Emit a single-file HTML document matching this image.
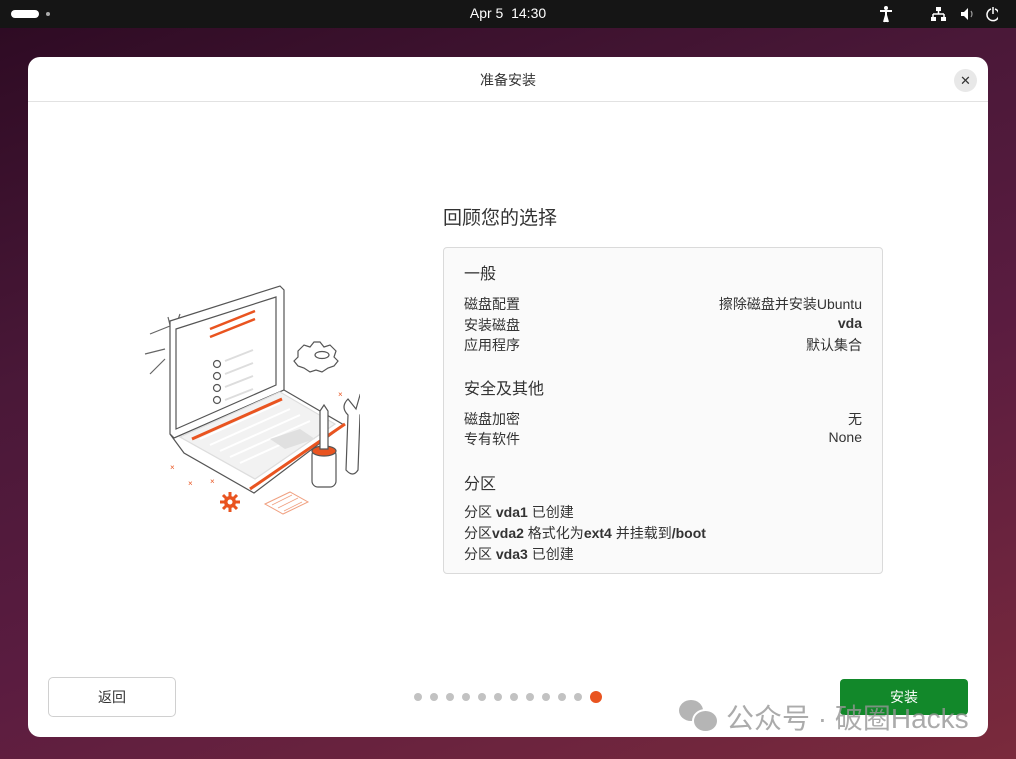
<!DOCTYPE html>
<html><head><meta charset="utf-8"><style>
*{margin:0;padding:0;box-sizing:border-box}
body{width:1016px;height:759px;overflow:hidden;position:relative;font-family:"Liberation Sans","Noto Sans CJK SC",sans-serif;
background:linear-gradient(160deg,#2c0a22 0%,#4a1838 35%,#5a1c40 60%,#7a2a3c 100%)}
.top{position:absolute;left:0;top:0;width:1016px;height:28px;background:#151515;color:#fff}
.dlg{position:absolute;left:28px;top:57px;width:960px;height:680px;background:#fff;border-radius:12px;overflow:hidden}
.hdr{position:absolute;left:0;top:0;width:960px;height:45px;border-bottom:1px solid #e2e2e2;text-align:center;line-height:46px;font-size:14px;color:#333}
.x{position:absolute;right:11px;top:12px;width:23px;height:23px;border-radius:50%;background:#e8e8e8;text-align:center;line-height:23px;font-size:13px;color:#333}
.t{position:absolute;color:#333;font-size:14px;white-space:nowrap}
.card{position:absolute;left:415px;top:190px;width:440px;height:327px;background:#fafafa;border:1px solid #dadada;border-radius:4px}
.r{right:20px;text-align:right}
b{font-weight:bold}
.dot{position:absolute;top:636px;width:8px;height:8px;border-radius:50%;background:#c2c2c2}
</style></head><body>
<div class="top">
<div style="position:absolute;left:11px;top:10px;width:28px;height:8px;border-radius:4px;background:#fff"></div>
<div style="position:absolute;left:46px;top:12px;width:4px;height:4px;border-radius:50%;background:#aaa"></div>
<div style="position:absolute;left:0;width:1016px;top:5px;text-align:center;font-size:14px">Apr 5&nbsp; 14:30</div>
<svg style="position:absolute;left:878px;top:5px" width="120" height="18" viewBox="0 0 120 18" fill="#fff" stroke="#fff">
<circle cx="8" cy="3" r="2" stroke="none"/><path d="M2 6h12M8 6v11M8 10l-2 7M8 10l2 7" stroke-width="2" fill="none"/>
<rect x="58" y="2" width="5" height="4" stroke="none"/><path d="M60.5 6v3M55 9h11M55 9v3M66 9v3" stroke-width="1.5" fill="none"/><rect x="53" y="12" width="5" height="4" stroke="none"/><rect x="63" y="12" width="5" height="4" stroke="none"/>
<path d="M83 7h3l4-4v12l-4-4h-3z" stroke="none"/><path d="M93 6q2 3 0 6" stroke-width="1.2" fill="none" stroke="#999"/>
<path d="M113 4a6 6 0 1 0 4 0M115 2v7" stroke-width="1.5" fill="none"/>
</svg>
</div>
<div class="dlg">
<div class="hdr">准备安装</div>
<div class="x">✕</div>
<svg style="position:absolute;left:92px;top:222px" width="240" height="240" viewBox="100 280 240 240" fill="none" stroke="#555" stroke-width="1.2">
<path d="M130 335l20-8M125 355l20-5M130 375l15-15M148 318l5 20M160 315l-7 20" stroke="#666"/>
<path d="M150 322l110-35l4 4v100l-110 48l-4-4z" fill="#fff"/>
<path d="M156 330l100-32v88l-100 44z" fill="#fff"/>
<path d="M150 435l4 4l110-48l60 35l-90 68l-70-40z" fill="#fff"/>
<path d="M160 438l100-45l55 32l-80 55z" fill="#f2f2f2" stroke="#ddd"/>
<path d="M180 440l80-36M190 446l80-36M200 452l80-36M210 458l80-36M220 464l55-25" stroke="#fff" stroke-width="2"/>
<path d="M172 440l90-40" stroke="#e95420" stroke-width="3"/>
<path d="M230 490l95-65" stroke="#e95420" stroke-width="3"/>
<path d="M190 330l45-18M190 338l45-18" stroke="#e95420" stroke-width="2.5"/>
<path d="M205 362l28-11M205 375l28-11M205 388l28-11M205 401l28-11" stroke="#ddd" stroke-width="2"/>
<circle cx="197" cy="365" r="3.5"/><circle cx="197" cy="377" r="3.5"/><circle cx="197" cy="389" r="3.5"/><circle cx="197" cy="401" r="3.5"/>
<path d="M250 440l30-10l15 10l-30 10z" fill="#e0e0e0" stroke="none"/>
<path d="M278 352l6-6l6 2l4-5l6 0l4 5l6-2l6 6l-2 6l4 4l-4 5l-6 2l-6 4l-6-2l-6 2l-6-4l-6-2l-4-5l4-4z" fill="#fff"/><ellipse cx="302" cy="356" rx="7" ry="3.5"/>
<rect x="292" y="450" width="24" height="38" rx="6" fill="#fff"/><ellipse cx="304" cy="452" rx="12" ry="5" fill="#e95420"/>
<path d="M300 412l4-6l4 6v38h-8z" fill="#fff"/>
<path d="M328 400l8 10l4-14q8 10 0 20l-2 55q-5 8-12 0l2-55q-8-8 0-16z" fill="#fff"/>
<path d="M210 493v20M200 503h20M203 496l14 14M217 496l-14 14" stroke="#e95420" stroke-width="3"/>
<circle cx="210" cy="503" r="6" fill="#e95420" stroke="none"/><circle cx="210" cy="503" r="2.5" fill="#fff" stroke="none"/>
<path d="M245 505l25-12l18 10l-25 12z" stroke="#f0a080" stroke-width="1"/>
<path d="M252 506l20-10M258 509l20-10M264 512l18-9" stroke="#f0a080" stroke-width="0.8"/>
<text x="150" y="471" fill="#e95420" stroke="none" font-size="8">×</text><text x="168" y="487" fill="#e95420" stroke="none" font-size="8">×</text><text x="190" y="485" fill="#e95420" stroke="none" font-size="8">×</text><text x="318" y="398" fill="#e95420" stroke="none" font-size="8">×</text>
</svg>
<div class="t" style="left:415px;top:146px;font-size:19px">回顾您的选择</div>
<div class="card">
<div class="t" style="left:20px;top:12px;font-size:16px">一般</div>
<div class="t" style="left:20px;top:46px">磁盘配置</div><div class="t r" style="top:46px">擦除磁盘并安装Ubuntu</div>
<div class="t" style="left:20px;top:67px">安装磁盘</div><div class="t r" style="top:67px"><b>vda</b></div>
<div class="t" style="left:20px;top:87px">应用程序</div><div class="t r" style="top:87px">默认集合</div>
<div class="t" style="left:20px;top:127px;font-size:16px">安全及其他</div>
<div class="t" style="left:20px;top:161px">磁盘加密</div><div class="t r" style="top:161px">无</div>
<div class="t" style="left:20px;top:181px">专有软件</div><div class="t r" style="top:181px">None</div>
<div class="t" style="left:20px;top:222px;font-size:16px">分区</div>
<div class="t" style="left:20px;top:254px">分区 <b>vda1</b> 已创建</div>
<div class="t" style="left:20px;top:275px">分区<b>vda2</b> 格式化为<b>ext4</b> 并挂载到<b>/boot</b></div>
<div class="t" style="left:20px;top:296px">分区 <b>vda3</b> 已创建</div>
</div>
<div style="position:absolute;left:20px;top:620px;width:128px;height:40px;border:1px solid #d0d0d0;border-radius:5px;text-align:center;line-height:38px;font-size:14px;color:#333">返回</div>
<div class="dot" style="left:386px"></div><div class="dot" style="left:402px"></div><div class="dot" style="left:418px"></div><div class="dot" style="left:434px"></div><div class="dot" style="left:450px"></div><div class="dot" style="left:466px"></div><div class="dot" style="left:482px"></div><div class="dot" style="left:498px"></div><div class="dot" style="left:514px"></div><div class="dot" style="left:530px"></div><div class="dot" style="left:546px"></div>
<div style="position:absolute;left:562px;top:634px;width:12px;height:12px;border-radius:50%;background:#e95420"></div>
<div style="position:absolute;left:812px;top:622px;width:128px;height:36px;border-radius:4px;background:#12882a;color:#fff;text-align:center;line-height:36px;font-size:14px">安装</div>
<div style="position:absolute;left:651px;top:643px;width:24px;height:21px;border-radius:50%;background:#b5b5b5"></div>
<div style="position:absolute;left:664px;top:652px;width:27px;height:24px;border-radius:50%;background:#b5b5b5;border:2px solid #fff"></div>
<div style="position:absolute;left:698px;top:640px;font-size:28px;color:rgba(150,150,150,.8);white-space:nowrap">公众号 · 破圈Hacks</div>
</div>
</body></html>
